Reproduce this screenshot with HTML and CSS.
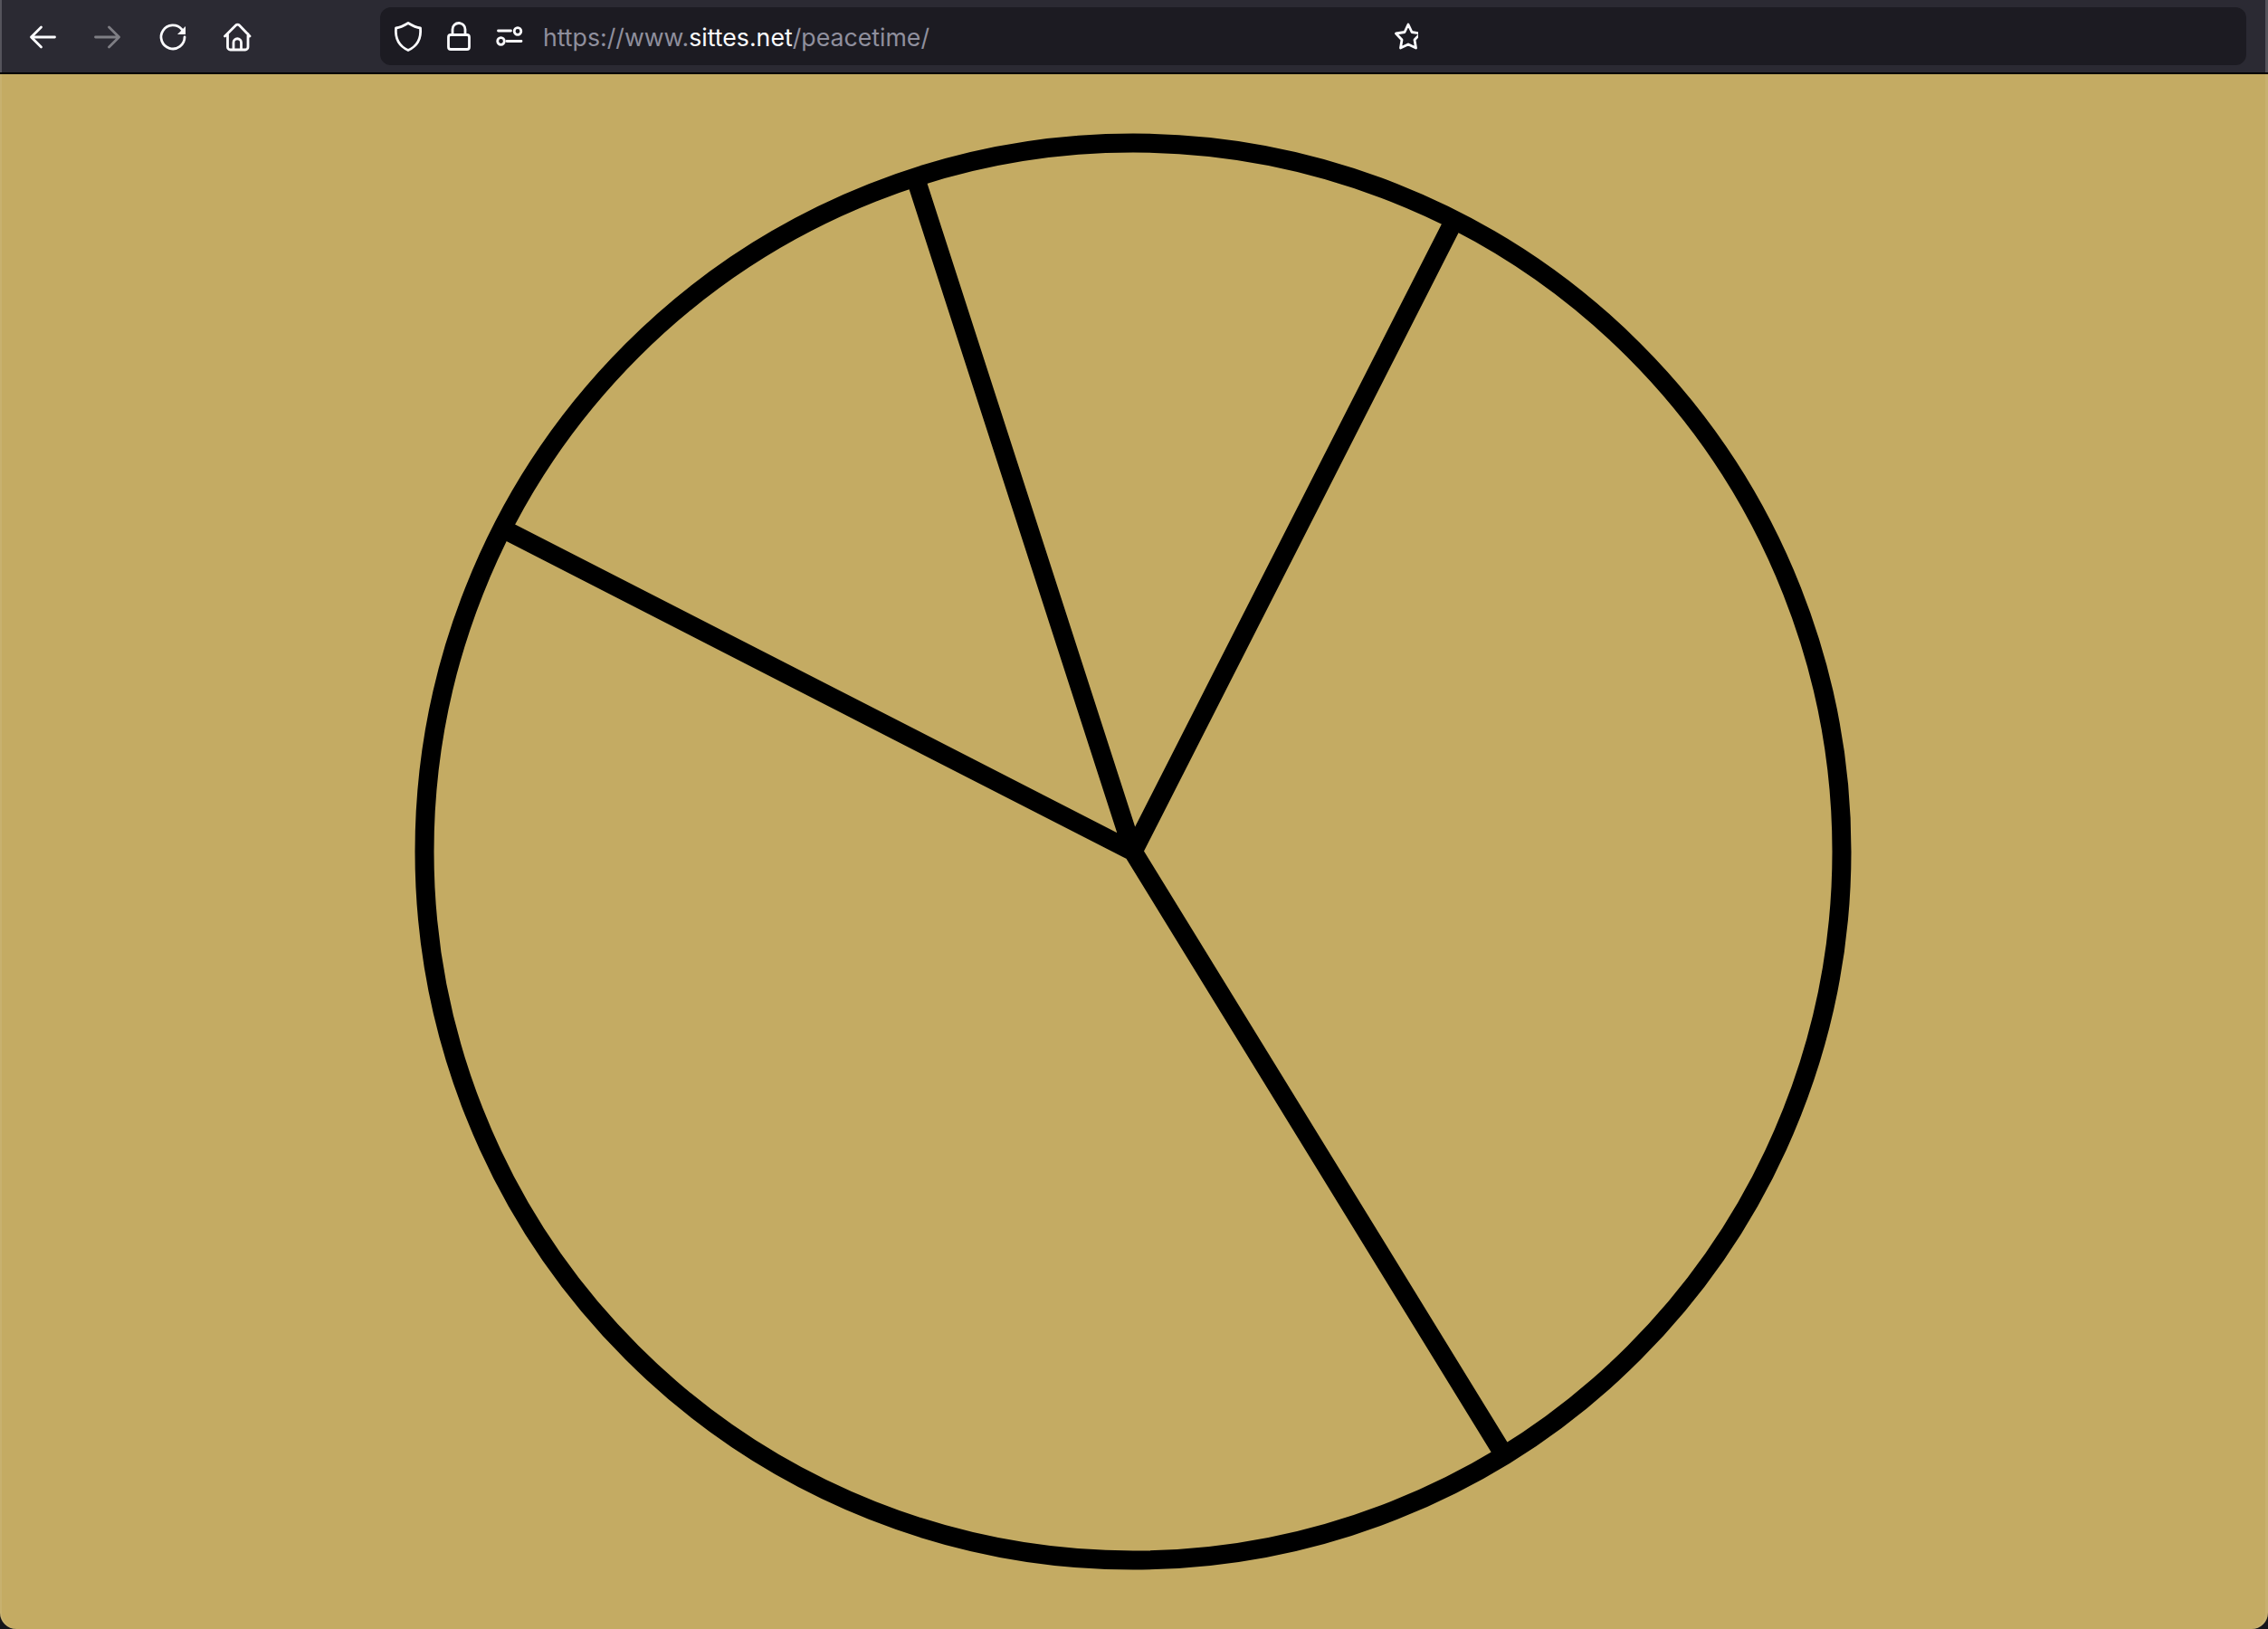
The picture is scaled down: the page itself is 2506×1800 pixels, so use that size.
FILE: index.html
```html
<!DOCTYPE html>
<html lang="en">
<head>
<meta charset="utf-8">
<title>Peacetime</title>
<link rel="stylesheet" href="styles.css">
</head>
<body>
<div class="window">
  <header class="toolbar">
    <nav class="nav">
      <svg class="icon" viewBox="0 0 40 40"><path d="M33.500 21H7.500M18.500 10 7.500 21 18.500 32"/></svg>
      <svg class="icon icon-off" viewBox="0 0 40 40"><path d="M6.500 21H32.500M21.500 10 32.500 21 21.500 32"/></svg>
      <svg class="icon" viewBox="0 0 40 40"><path d="M30 12.600A13 13 0 1 0 33 21"/><path class="solid" d="M25 18H34V9Z"/></svg>
      <svg class="icon" viewBox="0 0 40 40"><path d="M5.500 20 17.500 8a2.800 2.800 0 0 1 4 0L33 20M8.500 17.500V32a3 3 0 0 0 3 3H28a3 3 0 0 0 3-3V17.500M15 35V27a4.250 4.250 0 0 1 8.500 0V35"/></svg>
    </nav>
    <div class="urlbar">
      <svg class="icon" viewBox="0 0 40 40"><path d="M20 5.500C25 8.500 29.500 10.500 33.500 11C34.500 22 30 31 20 35.500C10 31 5.500 22 6.500 11C10.500 10.500 15 8.500 20 5.500Z"/></svg>
      <svg class="icon" viewBox="0 0 40 40"><path d="M13 18.500V12.500a7 7 0 0 1 14 0V18.500M11 18.500H29a2.500 2.500 0 0 1 2.500 2.500V32a2.500 2.500 0 0 1-2.500 2.500H11A2.500 2.500 0 0 1 8.500 32V21A2.500 2.500 0 0 1 11 18.500Z"/></svg>
      <svg class="icon" viewBox="0 0 40 40"><path d="M7.500 14H21.500M17 25.500H33"/><circle cx="29" cy="14.500" r="3.800"/><circle cx="10.500" cy="25.500" r="3.800"/></svg>
      <div class="url">https://www.<b>sittes.net</b>/peacetime/</div>
      <svg class="star" viewBox="0 0 31 40"><path d="M20 7 24 15.500 33.500 17 27 24 28.500 33 20 29 11.500 33 13 24 6.500 17 16 15.500Z"/></svg>
    </div>
  </header>
  <main class="page">
    <svg class="pie" viewBox="0 82 2506 1718">
      <circle cx="1252" cy="941" r="783"/>
      <path d="M1252 941 1606 245M1252 941 1659 1603M1252 941 559 586M1252 941 1012 198"/>
    </svg>
  </main>
</div>
</body>
</html>
```

FILE: styles.css
```css
* {
  box-sizing: border-box;
}

html,
body {
  height: 100%;
}

body {
  margin: 0;
  background: #14141a;
  font-family: Inter, "Liberation Sans", sans-serif;
}

.window {
  display: flex;
  flex-direction: column;
  height: 1800px;
}

.toolbar {
  display: flex;
  align-items: center;
  flex: none;
  height: 82px;
  padding: 0 24px 0 27px;
  background: #2b2a33;
  border-bottom: 2px solid #000;
  box-shadow: inset 2px 0 0 #55545c, inset -3px 0 0 #55545c;
}

.nav {
  display: flex;
  gap: 32px;
  margin-right: 137px;
}

.icon {
  display: block;
  flex: none;
  width: 40px;
  height: 40px;
  fill: none;
  stroke: #fbfbfe;
  stroke-width: 2.800px;
  stroke-linecap: round;
  stroke-linejoin: round;
}

.icon-off {
  opacity: 0.4;
}

.solid {
  fill: #fbfbfe;
  stroke: none;
}

.urlbar {
  display: flex;
  flex: 1;
  align-items: center;
  gap: 16px;
  height: 64px;
  padding-left: 11px;
  background: #1c1b22;
  border-radius: 12px;
}

.url {
  flex: none;
  width: 920px;
  margin-left: 1px;
  padding-top: 1px;
  color: #8f8f9d;
  font-size: 26.700px;
  white-space: nowrap;
}

.url b {
  color: #fbfbfe;
  font-weight: 400;
}

.star {
  display: block;
  flex: none;
  width: 31px;
  height: 40px;
  fill: none;
  stroke: #fbfbfe;
  stroke-width: 2.800px;
  stroke-linejoin: round;
}

.page {
  flex: 1;
  min-height: 0;
  background: #c4ab63;
  border-radius: 0 0 18px 18px;
  box-shadow: inset 2px 0 0 rgba(255, 255, 255, 0.08), inset -3px 0 0 rgba(255, 255, 255, 0.08);
  overflow: hidden;
}

.pie {
  display: block;
  width: 100%;
  height: 100%;
  fill: none;
  stroke: #000;
  stroke-width: 21px;
}
```
